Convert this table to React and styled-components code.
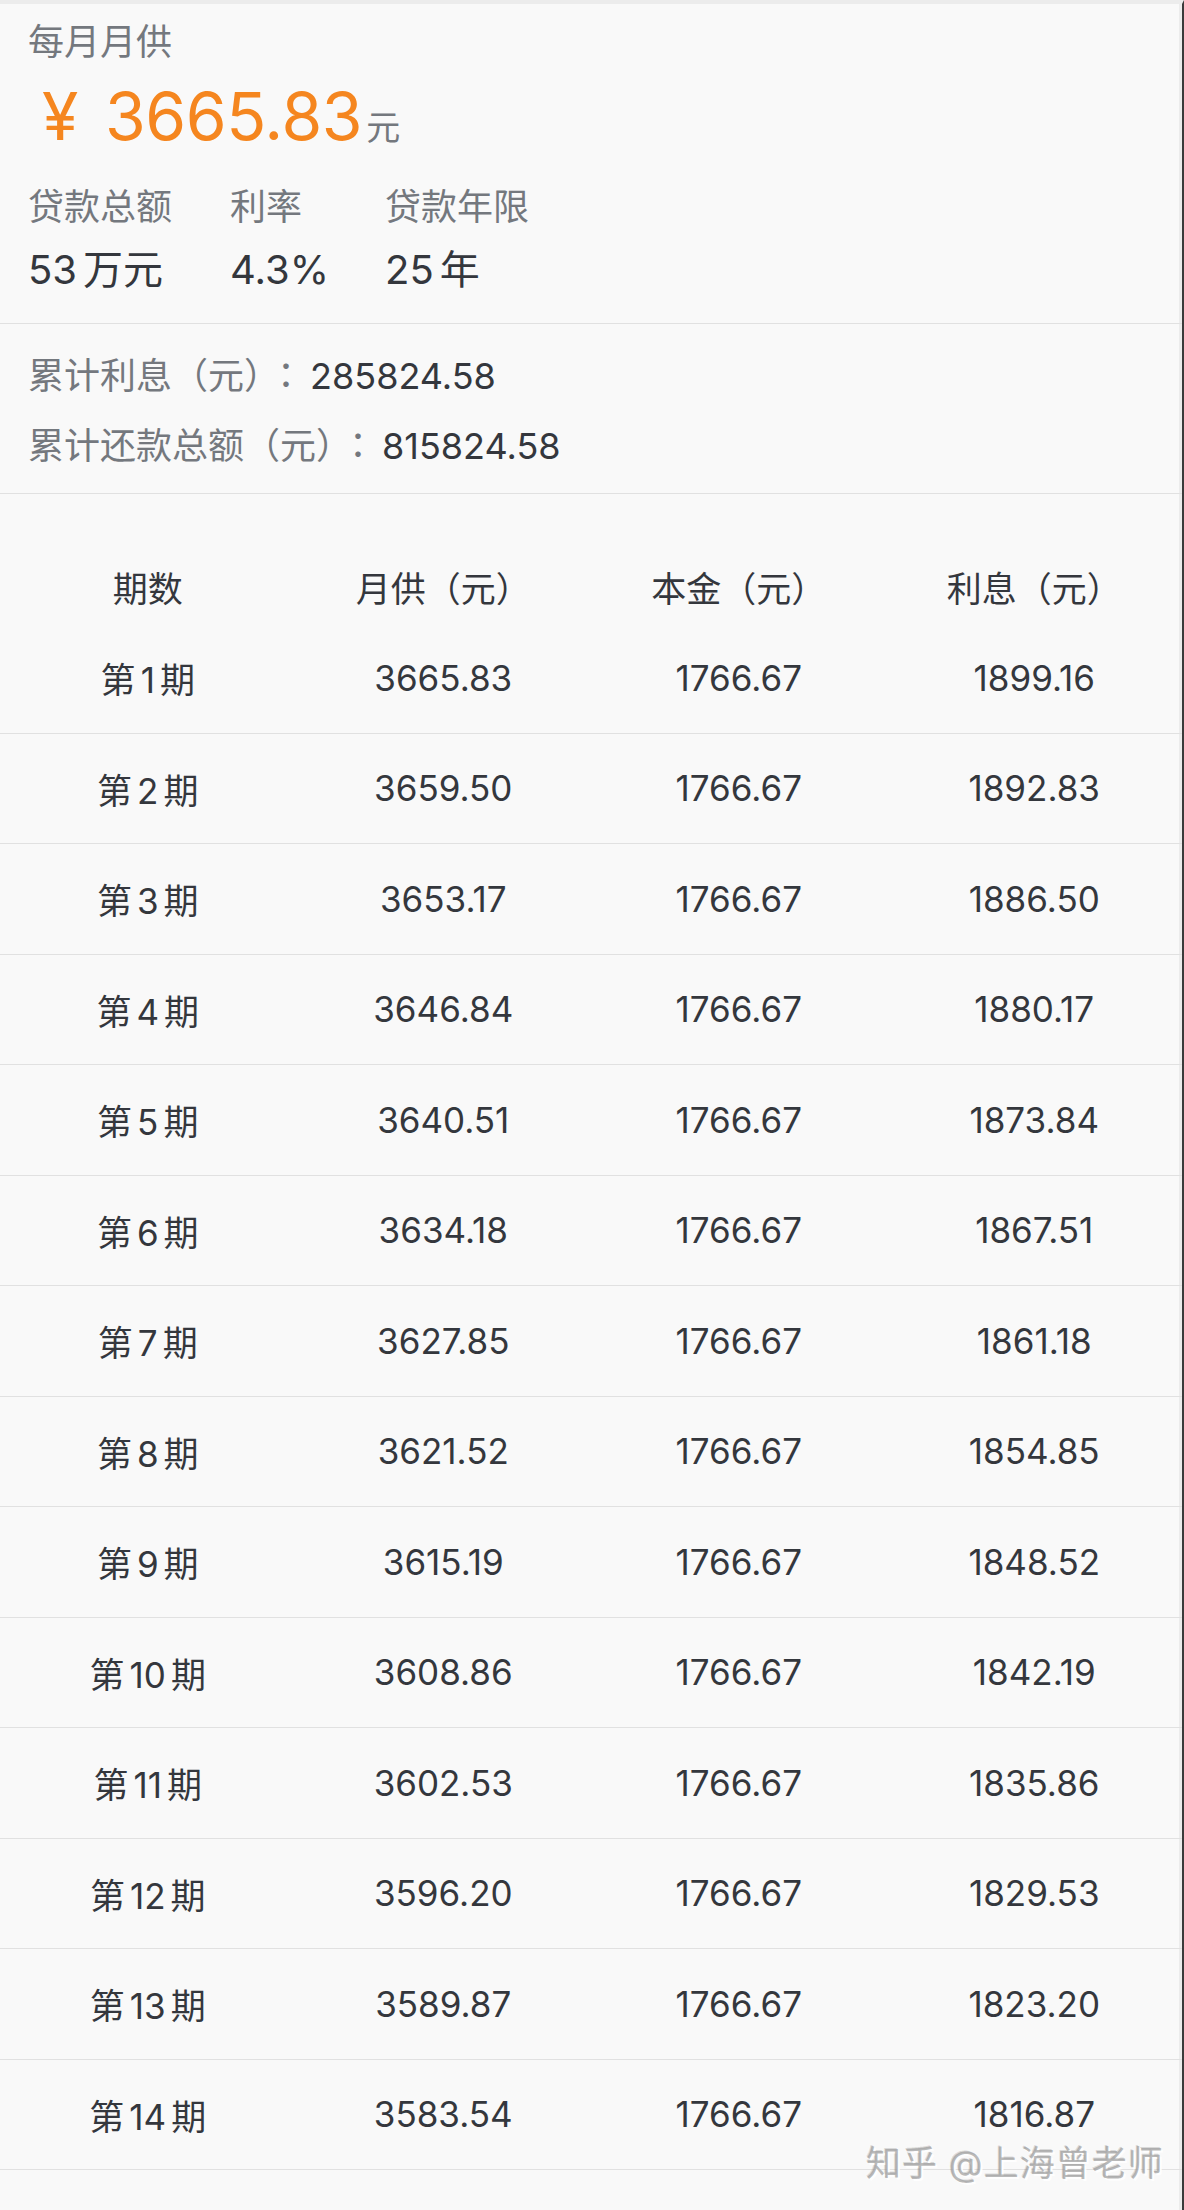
import React from "react";
import styled, { createGlobalStyle } from "styled-components";

const GlobalStyle = createGlobalStyle`
  html, body {
    margin: 0;
    padding: 0;
    background: #f9f9f9;
  }
  body {
    font-family: "Inter", "Noto Sans CJK SC", sans-serif;
  }
`;

const colors = {
  bg: "#f9f9f9",
  label: "#74787e",
  value: "#34373d",
  orange: "#f5861f",
  line: "#e1e1e1",
};

const Page = styled.div`
  position: relative;
  box-sizing: border-box;
  width: 1184px;
  min-height: 2210px;
  background: ${colors.bg};
  border-top: 4px solid #ececec;
  border-right: 2px solid #3b3b3b;
  box-shadow: inset -3px 0 0 #ececec;
`;

const Summary = styled.section`
  padding: 13px 28px 25px;
  border-bottom: 1px solid ${colors.line};
`;

const Title = styled.div`
  font-size: 36px;
  line-height: 50px;
  color: ${colors.label};
`;

const Amount = styled.div`
  margin-top: 9px;
  padding-left: 14px;
  height: 80px;
  display: flex;
  align-items: baseline;
  line-height: 80px;
  color: ${colors.orange};
  font-size: 66px;
  letter-spacing: -0.4px;
`;

const Yen = styled.span`
  margin-right: 27px;
`;

const Unit = styled.span`
  margin-left: 4px;
  font-size: 34px;
  letter-spacing: 0;
  color: ${colors.label};
`;

const Stats = styled.div`
  margin-top: 26px;
  display: grid;
  grid-template-columns: 202px 155px auto;
  row-gap: 10px;
`;

const StatLabel = styled.div`
  font-size: 36px;
  line-height: 50px;
  color: ${colors.label};
`;

const StatValue = styled.div`
  font-size: 40px;
  line-height: 56px;
  color: ${colors.value};
`;

const Gap = styled.span`
  margin-right: 6px;
`;

const Totals = styled.section`
  padding: 24px 28px 25px;
  border-bottom: 1px solid ${colors.line};
  display: flex;
  flex-direction: column;
  gap: 20px;
`;

const TotalLine = styled.div`
  height: 50px;
  font-size: 36px;
  line-height: 50px;
  color: ${colors.label};
`;

const Colon = styled.span`
  padding: 0 6px;
  font-family: "Noto Sans CJK TC", "Noto Sans CJK SC", sans-serif;
`;

const TotalNum = styled.span`
  color: ${colors.value};
`;

const Table = styled.section`
  padding-top: 56px;
`;

const Row = styled.div`
  box-sizing: border-box;
  display: grid;
  grid-template-columns: repeat(4, 1fr);
  align-items: center;
  height: ${(p) => (p.$head ? "73px" : "110.5px")};
  border-bottom: ${(p) => (p.$head ? "none" : `1px solid ${colors.line}`)};
`;

const Cell = styled.div`
  text-align: center;
  font-size: 35px;
  color: ${colors.value};
`;

const PeriodNum = styled.span`
  margin: 0 5px;
`;

const Watermark = styled.div`
  position: absolute;
  left: 866px;
  top: 2134px;
  font-size: 35px;
  line-height: 50px;
  letter-spacing: 1px;
  color: rgba(155, 155, 155, 0.7);
  text-shadow: 2px 2px 0 rgba(255, 255, 255, 0.95), -1px -1px 0 rgba(0, 0, 0, 0.12);
`;

const rows = [
  ["3665.83", "1899.16"],
  ["3659.50", "1892.83"],
  ["3653.17", "1886.50"],
  ["3646.84", "1880.17"],
  ["3640.51", "1873.84"],
  ["3634.18", "1867.51"],
  ["3627.85", "1861.18"],
  ["3621.52", "1854.85"],
  ["3615.19", "1848.52"],
  ["3608.86", "1842.19"],
  ["3602.53", "1835.86"],
  ["3596.20", "1829.53"],
  ["3589.87", "1823.20"],
  ["3583.54", "1816.87"],
];

export default function App() {
  return (
    <>
      <GlobalStyle />
      <Page>
        <Summary>
          <Title>每月月供</Title>
          <Amount>
            <Yen>¥</Yen>
            <span>3665.83</span>
            <Unit>元</Unit>
          </Amount>
          <Stats>
            <StatLabel>贷款总额</StatLabel>
            <StatLabel>利率</StatLabel>
            <StatLabel>贷款年限</StatLabel>
            <StatValue>
              <Gap>53</Gap>万元
            </StatValue>
            <StatValue>4.3%</StatValue>
            <StatValue>
              <Gap>25</Gap>年
            </StatValue>
          </Stats>
        </Summary>

        <Totals>
          <TotalLine>
            累计利息（元）<Colon>：</Colon>
            <TotalNum>285824.58</TotalNum>
          </TotalLine>
          <TotalLine>
            累计还款总额（元）<Colon>：</Colon>
            <TotalNum>815824.58</TotalNum>
          </TotalLine>
        </Totals>

        <Table>
          <Row $head>
            <Cell>期数</Cell>
            <Cell>月供（元）</Cell>
            <Cell>本金（元）</Cell>
            <Cell>利息（元）</Cell>
          </Row>
          {rows.map(([pay, interest], i) => (
            <Row key={i}>
              <Cell>
                第<PeriodNum>{i + 1}</PeriodNum>期
              </Cell>
              <Cell>{pay}</Cell>
              <Cell>1766.67</Cell>
              <Cell>{interest}</Cell>
            </Row>
          ))}
        </Table>

        <Watermark>知乎 @上海曾老师</Watermark>
      </Page>
    </>
  );
}
